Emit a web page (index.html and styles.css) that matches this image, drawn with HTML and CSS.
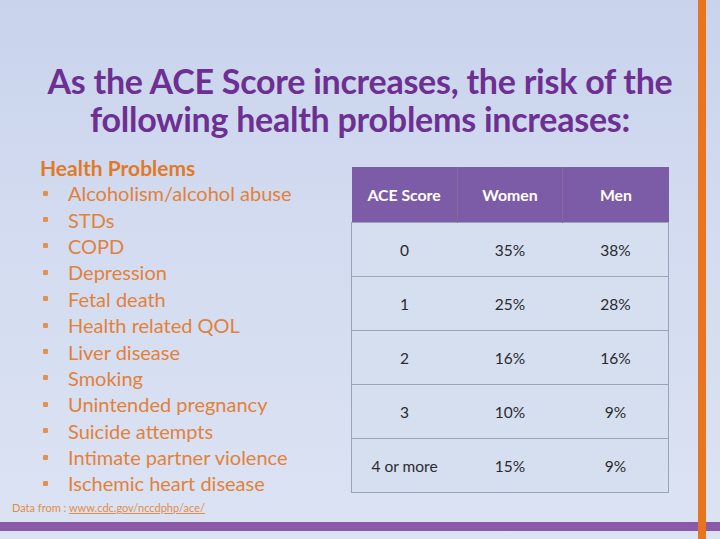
FILE: index.html
```html
<!DOCTYPE html>
<html lang="en">
<head>
<meta charset="utf-8">
<title>ACE Score and health problems</title>
<link rel="stylesheet" href="styles.css">
</head>
<body>
<div class="slide">
  <div class="main">
    <h1 class="title">As the ACE Score increases, the risk of the<br>following health problems increases:</h1>
    <div class="content">
      <div class="problems">
        <h2 class="problems-head">Health Problems</h2>
        <ul class="problem-list">
          <li><span class="dot"></span>Alcoholism/alcohol abuse</li>
          <li><span class="dot"></span>STDs</li>
          <li><span class="dot"></span>COPD</li>
          <li><span class="dot"></span>Depression</li>
          <li><span class="dot"></span>Fetal death</li>
          <li><span class="dot"></span>Health related QOL</li>
          <li><span class="dot"></span>Liver disease</li>
          <li><span class="dot"></span>Smoking</li>
          <li><span class="dot"></span>Unintended pregnancy</li>
          <li><span class="dot"></span>Suicide attempts</li>
          <li><span class="dot"></span>Intimate partner violence</li>
          <li><span class="dot"></span>Ischemic heart disease</li>
        </ul>
      </div>
      <table class="ace-table">
        <thead>
          <tr><th>ACE Score</th><th>Women</th><th>Men</th></tr>
        </thead>
        <tbody>
          <tr><td>0</td><td>35%</td><td>38%</td></tr>
          <tr><td>1</td><td>25%</td><td>28%</td></tr>
          <tr><td>2</td><td>16%</td><td>16%</td></tr>
          <tr><td>3</td><td>10%</td><td>9%</td></tr>
          <tr><td>4 or more</td><td>15%</td><td>9%</td></tr>
        </tbody>
      </table>
    </div>
    <p class="source">Data from : <span class="source-link">www.cdc.gov/nccdphp/ace/</span></p>
  </div>
  <div class="purple-bar"></div>
  <div class="orange-bar"></div>
</div>
</body>
</html>
```

FILE: styles.css
```css
html, body {
  margin: 0;
  padding: 0;
}
body {
  width: 720px;
  height: 539px;
  overflow: hidden;
  font-family: Lato, "Open Sans", sans-serif;
}
.slide {
  position: relative;
  width: 720px;
  height: 539px;
  background: linear-gradient(180deg, #c9d3ec 0%, #d3dcf0 45%, #dbe3f3 100%);
  display: flex;
  flex-direction: column;
}
.main {
  height: 522px;
  display: flex;
  flex-direction: column;
}
.title {
  margin: 0;
  padding-top: 62px;
  text-align: center;
  color: #6e2f93;
  font-size: 34px;
  font-weight: 700;
  line-height: 38px;
  letter-spacing: -0.25px;
}
.content {
  display: flex;
  justify-content: space-between;
  margin-top: 17px;
  padding-left: 40px;
  padding-right: 51px;
}
.problems-head {
  margin: 0;
  color: #e07a28;
  font-size: 21px;
  font-weight: 700;
  line-height: 25px;
}
.problem-list {
  list-style: none;
  margin: 0;
  padding: 0;
}
.problem-list li {
  display: flex;
  align-items: center;
  height: 26.4px;
  color: #e2813a;
  font-size: 20px;
}
.dot {
  width: 5px;
  height: 5px;
  background: #e39050;
  margin-left: 3px;
  margin-right: 20px;
  border-radius: 1px;
}
.ace-table {
  margin-top: 12px;
  width: 318px;
  border-collapse: collapse;
  table-layout: fixed;
  align-self: flex-start;
}
.ace-table th {
  background: #7d5ca7;
  color: #ffffff;
  font-size: 15.8px;
  font-weight: 700;
  height: 55px;
  padding: 0;
  border-left: 1px solid #86689f;
}
.ace-table th:first-child {
  border-left: none;
}
.ace-table td {
  text-align: center;
  color: #2a2a2e;
  font-size: 15.5px;
  height: 53px;
  padding: 0;
  background: #d6dff0;
  border-top: 1px solid #9ba3b6;
  border-bottom: 1px solid #9ba3b6;
}
.ace-table td:first-child {
  border-left: 1px solid #9ba3b6;
}
.ace-table td:last-child {
  border-right: 1px solid #9ba3b6;
}
.source {
  margin: auto 0 0 0;
  padding: 0 0 8px 12px;
  font-size: 11px;
  color: #e08d4a;
}
.source-link {
  text-decoration: underline;
}
.purple-bar {
  height: 9px;
  background: #8c59a9;
}
.orange-bar {
  position: absolute;
  top: 0;
  bottom: 0;
  left: 698px;
  width: 8px;
  background: #e8741d;
}
```
